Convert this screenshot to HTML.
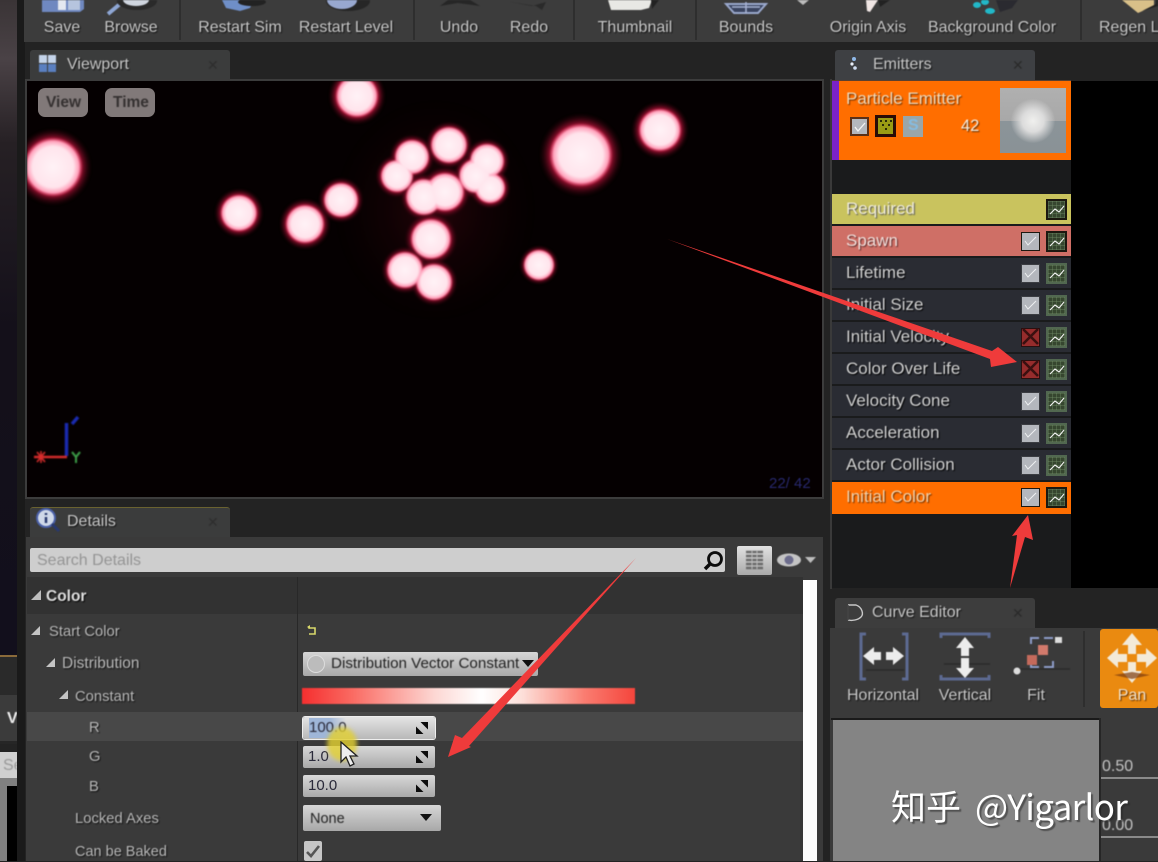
<!DOCTYPE html>
<html><head><meta charset="utf-8"><style>
*{box-sizing:border-box}
html,body{margin:0;padding:0;background:#232323}
body{width:1158px;height:861px;overflow:hidden;position:relative;font-family:"Liberation Sans","Noto Sans CJK SC",sans-serif;font-size:16px;color:#c8c8c8}
.a{position:absolute}
.t{position:absolute;white-space:nowrap;text-shadow:1px 1px 1px #111;filter:blur(.45px);line-height:20px;transform:translate(-50%,1px)}
.l{position:absolute;white-space:nowrap;filter:blur(.45px);line-height:20px;transform:translateY(1px)}
.tab{position:absolute;height:30px;width:200px;background:#3b3c3c;border-radius:3px 3px 0 0}
.row{position:absolute;left:832px;width:239px;height:30px;background:#2a2c33}
.row .l{left:14px;top:5px;color:#d2d2d2;text-shadow:1px 1px 1px #000;font-size:17px;transform:none}
.cb{position:absolute;left:189px;top:6px;width:19px;height:19px;background:#b4b7bd;border:1px solid #3b3d42}
.x{background:#962c2c;border-color:#2a1010}
.cv{position:absolute;left:214px;top:5px;width:21px;height:21px;border:2px solid #526850;background-color:#36462f;background-image:repeating-linear-gradient(0deg,rgba(120,150,110,.35) 0 1px,transparent 1px 4px),repeating-linear-gradient(90deg,rgba(120,150,110,.35) 0 1px,transparent 1px 4px)}
.dark .cb,.dark .cv{border-color:#1c1810}
.lab{font-size:14.8px;color:#b9b9b9;text-shadow:1px 1px 1px #111}
.num{position:absolute;left:303px;width:132px;height:22px;border-radius:2px;background:linear-gradient(#d8d8d8,#a9a9a9);color:#2a2a3a;font-size:15px;padding-left:5px;line-height:22px}
.corner{position:absolute;right:7px;top:5px;width:12px;height:12px}
.core circle{mix-blend-mode:lighten}
</style></head><body>

<!-- left strip -->
<div class="a" style="left:0;top:0;width:17px;height:655px;background:linear-gradient(#3a3436 0,#4a4246 9%,#262024 22%,#14101a 50%,#120f1c 100%)"></div>
<div class="a" style="left:0;top:655px;width:17px;height:2px;background:#8a6a3a"></div>
<div class="a" style="left:0;top:657px;width:17px;height:38px;background:#2a2a2a"></div>
<div class="a" style="left:0;top:695px;width:17px;height:46px;background:#3b3b3b"></div>
<div class="l" style="left:7px;top:708px;color:#eee;font-weight:bold;width:10px;overflow:hidden">V</div>
<div class="a" style="left:0;top:741px;width:17px;height:3px;background:#262626"></div>
<div class="a" style="left:0;top:752px;width:17px;height:26px;background:#d0d0d0"></div>
<div class="l" style="left:3px;top:755px;color:#999;width:14px;overflow:hidden">Se</div>
<div class="a" style="left:0;top:778px;width:17px;height:83px;background:#808080"></div>
<div class="a" style="left:7px;top:786px;width:10px;height:75px;background:#000"></div>
<div class="a" style="left:17px;top:0;width:8px;height:861px;background:#1a1a1a"></div>

<!-- toolbar -->
<div class="a" style="left:24px;top:0;width:1134px;height:42px;background:#3c3c3c"></div>
<div class="a" style="left:179px;top:0;width:2px;height:40px;background:#2e2e2e"></div>
<div class="a" style="left:413px;top:0;width:2px;height:40px;background:#2e2e2e"></div>
<div class="a" style="left:573px;top:0;width:2px;height:40px;background:#2e2e2e"></div>
<div class="a" style="left:695px;top:0;width:2px;height:40px;background:#2e2e2e"></div>
<div class="a" style="left:1080px;top:0;width:2px;height:40px;background:#2e2e2e"></div>
<svg class="a" style="left:0;top:0;filter:blur(.5px)" width="1158" height="20" viewBox="0 0 1158 20">
<path d="M42 0h42v9l-4 3H42z" fill="#6f88c0"/><rect x="58" y="0" width="8" height="10" fill="#e4e8f0"/><rect x="68" y="0" width="12" height="10" fill="#b6c4de"/>
<path d="M108 14l12-10" stroke="#8ea6d4" stroke-width="4"/><ellipse cx="137" cy="1" rx="20" ry="9" fill="#2a2a2a"/><ellipse cx="136" cy="0" rx="13" ry="6" fill="#cfd5df"/>
<path d="M222 0l4 8 14 3 10-3 4-8z" fill="#6f8fc8"/><ellipse cx="252" cy="2" rx="14" ry="4" fill="#222"/>
<ellipse cx="348" cy="1" rx="22" ry="10" fill="#262626"/><ellipse cx="342" cy="0" rx="15" ry="9" fill="#98a8d0"/>
<path d="M440 6l18-3 22 3-10-6h-22z" fill="#262626"/><path d="M510 2l22 4 14-4-4 8-6-4z" fill="#2a2a2a"/>
<path d="M608 0h44l-3 8-8 2h-30z" fill="#e8e8e4"/><path d="M651 0h8l-7 9z" fill="#222"/>
<path d="M726 4l8 9h24l8-9z" fill="#3a4460" stroke="#9aa8cc" stroke-width="2"/><path d="M746 2v11M732 7h28" stroke="#a7b3d3" stroke-width="1.5"/>
<path d="M797 0h12l-6 5z" fill="#bcbcbc"/>
<path d="M866 0h12l-8 12-3-1z" fill="#f0e6e4"/><path d="M878 0h12l-10 7z" fill="#222"/>
<ellipse cx="977" cy="5" rx="4" ry="3" fill="#22b8c8"/><ellipse cx="985" cy="2" rx="4" ry="3" fill="#22b8c8"/><ellipse cx="990" cy="11" rx="5" ry="3" fill="#22b8c8"/><path d="M996 0h22l-6 8-12 4z" fill="#2a2a30"/>
<path d="M1122 0h32v6l-16 7z" fill="#d9c089"/><path d="M1142 11l14-7v-4h2v6z" fill="#222"/>
</svg>
<div class="t" style="left:62px;top:17px">Save</div>
<div class="t" style="left:131px;top:17px">Browse</div>
<div class="t" style="left:240px;top:17px">Restart Sim</div>
<div class="t" style="left:346px;top:17px">Restart Level</div>
<div class="t" style="left:459px;top:17px">Undo</div>
<div class="t" style="left:529px;top:17px">Redo</div>
<div class="t" style="left:635px;top:17px">Thumbnail</div>
<div class="t" style="left:746px;top:17px">Bounds</div>
<div class="t" style="left:868px;top:17px">Origin Axis</div>
<div class="t" style="left:992px;top:17px">Background Color</div>
<div class="l" style="left:1099px;top:17px;text-shadow:1px 1px 1px #111">Regen L</div>

<!-- viewport tab -->
<div class="tab" style="left:30px;top:50px"></div>
<svg class="a" style="left:38px;top:54px;filter:blur(.4px)" width="20" height="20"><path d="M1 1h8v8H1zM10 1h8v8h-8z" fill="#c4d4ea"/><path d="M1 10h8v8H1zM10 10h8v8h-8z" fill="#5a7fc0"/></svg>
<div class="l" style="left:67px;top:54px;text-shadow:1px 1px 1px #111">Viewport</div>
<div class="l" style="left:207px;top:54px;color:#2e2e2e;font-size:14px">✕</div>

<!-- viewport -->
<div class="a" style="left:25px;top:79px;width:799px;height:420px;background:#3c3c3c"></div>
<div class="a" style="left:27px;top:81px;width:795px;height:416px;background:#050001;overflow:hidden">
<svg width="795" height="416" viewBox="27 81 795 416" style="position:absolute;left:0;top:0;filter:blur(.9px)">
<defs>
<radialGradient id="h"><stop offset="0" stop-color="#b8103a"/><stop offset=".68" stop-color="#a80e32"/><stop offset=".78" stop-color="#6a0a20"/><stop offset="1" stop-color="#200006" stop-opacity="0"/></radialGradient>
<radialGradient id="p"><stop offset="0" stop-color="#fff2f6"/><stop offset=".68" stop-color="#ffe4ec"/><stop offset=".86" stop-color="#ffa0ba"/><stop offset="1" stop-color="#f0466e" stop-opacity="0"/></radialGradient>
<radialGradient id="g"><stop offset="0" stop-color="#4a0814" stop-opacity=".45"/><stop offset="1" stop-color="#200006" stop-opacity="0"/></radialGradient>
</defs>
<ellipse cx="435" cy="210" rx="100" ry="110" fill="url(#g)"/>
<g fill="url(#h)">
<circle cx="357" cy="96" r="29"/><circle cx="53" cy="167" r="39"/><circle cx="239" cy="213" r="25"/><circle cx="305" cy="224" r="26"/><circle cx="341" cy="200" r="23"/><circle cx="397" cy="176" r="22"/><circle cx="412" cy="157" r="23"/><circle cx="449" cy="145" r="24"/><circle cx="487" cy="161" r="23"/><circle cx="476" cy="176" r="23"/><circle cx="490" cy="188" r="21"/><circle cx="424" cy="197" r="24"/><circle cx="445" cy="192" r="26"/><circle cx="431" cy="239" r="27"/><circle cx="405" cy="270" r="24"/><circle cx="434" cy="282" r="24"/><circle cx="539" cy="265" r="20"/><circle cx="581" cy="155" r="42"/><circle cx="660" cy="130" r="29"/>
</g>
<g fill="url(#p)" class="core">
<circle cx="357" cy="96" r="22"/><circle cx="53" cy="167" r="30"/><circle cx="239" cy="213" r="19"/><circle cx="305" cy="224" r="20"/><circle cx="341" cy="200" r="18"/><circle cx="397" cy="176" r="17"/><circle cx="412" cy="157" r="18"/><circle cx="449" cy="145" r="19"/><circle cx="487" cy="161" r="18"/><circle cx="476" cy="176" r="18"/><circle cx="490" cy="188" r="16"/><circle cx="424" cy="197" r="19"/><circle cx="445" cy="192" r="20"/><circle cx="431" cy="239" r="21"/><circle cx="405" cy="270" r="19"/><circle cx="434" cy="282" r="19"/><circle cx="539" cy="265" r="16"/><circle cx="581" cy="155" r="32"/><circle cx="660" cy="130" r="22"/>
</g>
<path d="M66.5 456V423" stroke="#1a2ab0" stroke-width="3.5"/><path d="M72 424l6-7" stroke="#1a2ab0" stroke-width="3.5"/>
<path d="M34 457h33" stroke="#d82c2c" stroke-width="2.5"/><path d="M37 452l8 10M45 452l-8 10M41 451v12" stroke="#d82c2c" stroke-width="1.6"/>
<path d="M72 452l4 5 4-5M76 457v6" stroke="#3ea24a" stroke-width="2" fill="none"/>
</svg>
<div class="l" style="left:742px;top:392px;color:#28286e;font-size:15px">22/ 42</div>
</div>
<div class="a" style="left:38px;top:88px;width:50px;height:29px;background:#817979;border-radius:7px"></div>
<div class="l" style="left:46px;top:92px;color:#353131;font-weight:bold;font-size:15.5px">View</div>
<div class="a" style="left:105px;top:88px;width:50px;height:29px;background:#817979;border-radius:7px"></div>
<div class="l" style="left:113px;top:92px;color:#353131;font-weight:bold;font-size:15.5px">Time</div>

<!-- details -->
<div class="a" style="left:26px;top:537px;width:797px;height:324px;background:#3a3a3a"></div>
<div class="tab" style="left:30px;top:507px;border-top:1px solid #6a6230"></div>
<svg class="a" style="left:36px;top:507px;filter:blur(.4px)" width="26" height="26"><circle cx="10" cy="11" r="9" fill="#cfd8e8" stroke="#4a60a8" stroke-width="2"/><path d="M16 17l7 7" stroke="#28386e" stroke-width="3"/><path d="M10 6v2M10 10v6" stroke="#28386e" stroke-width="2.5"/></svg>
<div class="l" style="left:67px;top:511px;text-shadow:1px 1px 1px #111">Details</div>
<div class="l" style="left:207px;top:511px;color:#2e2e2e;font-size:14px">✕</div>
<div class="a" style="left:30px;top:548px;width:695px;height:24px;background:#cecece;border-radius:2px"></div>
<div class="l" style="left:37px;top:550px;color:#949494">Search Details</div>
<svg class="a" style="left:702px;top:549px" width="24" height="23"><circle cx="13" cy="10" r="6.5" fill="none" stroke="#0c0c0c" stroke-width="2.8"/><path d="M8 15l-5 5" stroke="#0c0c0c" stroke-width="3.5"/></svg>
<div class="a" style="left:737px;top:546px;width:35px;height:29px;background:linear-gradient(#e2e2e2,#a9a9a9);border-radius:2px"></div>
<svg class="a" style="left:745px;top:550px;filter:blur(.4px)" width="20" height="20"><path d="M1 2h17M1 6h17M1 10h17M1 14h17M1 18h17" stroke="#6a6a6a" stroke-width="2.4"/><path d="M7 1v18M12 1v18" stroke="#bbb" stroke-width="1"/></svg>
<svg class="a" style="left:776px;top:552px;filter:blur(.4px)" width="42" height="16"><ellipse cx="13" cy="8" rx="12" ry="6.5" fill="#c4c4c4"/><circle cx="13" cy="8" r="4.5" fill="#6c6c8c"/><path d="M29 5h11l-5.500 6z" fill="#bdbdbd"/></svg>

<div class="a" style="left:27px;top:577px;width:776px;height:37px;background:#323232"></div>
<div class="a" style="left:297px;top:577px;width:1px;height:284px;background:#282828"></div>
<div class="a" style="left:27px;top:712px;width:776px;height:29px;background:#484848"></div>
<div class="a" style="left:803px;top:580px;width:14px;height:281px;background:#fff"></div>
<svg class="a" style="left:0;top:0;pointer-events:none" width="300" height="861">
<path d="M41 590v10H31z" fill="#bdbdbd"/><path d="M40 626v9H31z" fill="#c4c4c4"/><path d="M55 658v9H46z" fill="#c4c4c4"/><path d="M68 690v9H59z" fill="#c4c4c4"/>
</svg>
<div class="l" style="left:46px;top:586px;color:#e0e0e0;font-weight:bold;font-size:15.500px;text-shadow:1px 1px 1px #000">Color</div>
<div class="l lab" style="left:49px;top:621px">Start Color</div>
<div class="l lab" style="left:62px;top:653px;font-size:15.500px">Distribution</div>
<div class="l lab" style="left:75px;top:686px">Constant</div>
<div class="l lab" style="left:89px;top:717px">R</div>
<div class="l lab" style="left:89px;top:746px">G</div>
<div class="l lab" style="left:89px;top:776px">B</div>
<div class="l lab" style="left:75px;top:808px">Locked Axes</div>
<div class="l lab" style="left:75px;top:841px;font-size:14.500px">Can be Baked</div>

<svg class="a" style="left:306px;top:624px" width="13" height="13"><path d="M3 2v2h6v6H3" fill="none" stroke="#d8d86a" stroke-width="1.6"/><path d="M1 3l3-2v4z" fill="#d8d86a"/></svg>
<div class="a" style="left:303px;top:652px;width:235px;height:24px;background:linear-gradient(#d6d6d6,#a8a8a8);border-radius:2px"></div>
<div class="a" style="left:307px;top:655px;width:18px;height:18px;border-radius:50%;background:#bcbcbc;border:1px solid #ddd"></div>
<div class="l" style="left:331px;top:653px;color:#222;font-size:15.200px">Distribution Vector Constant</div>
<svg class="a" style="left:522px;top:660px" width="12" height="7"><path d="M0 0h12l-6 7z" fill="#111"/></svg>
<div class="a" style="left:302px;top:688px;width:333px;height:16px;background:linear-gradient(90deg,#f52f2f 0,#fa6a62 15%,#fdd8d4 40%,#fff 54%,#fde0da 66%,#fa7c70 85%,#f5453c 100%);filter:blur(.5px)"></div>

<div class="num" style="top:717px;background:linear-gradient(#e4e4e4,#b8b8b8);box-shadow:0 0 0 1px #eee"><span style="position:absolute;left:6px;top:1px;width:37px;height:20px;background:linear-gradient(90deg,#9fb6d8 55%,rgba(170,190,220,0))"></span><span class="l" style="left:6px;top:1px;transform:none">100.0</span>
<svg class="corner" viewBox="0 0 12 12"><path d="M4.500 0H12v7.500zM0 4.500V12h7.500z" fill="#0c0c0c"/></svg></div>
<div class="num" style="top:746px">1.0<svg class="corner" viewBox="0 0 12 12"><path d="M4.500 0H12v7.500zM0 4.500V12h7.500z" fill="#0c0c0c"/></svg></div>
<div class="num" style="top:775px">10.0<svg class="corner" viewBox="0 0 12 12"><path d="M4.500 0H12v7.500zM0 4.500V12h7.500z" fill="#0c0c0c"/></svg></div>
<div class="a" style="left:303px;top:805px;width:138px;height:26px;background:linear-gradient(#d6d6d6,#a8a8a8);border-radius:2px"></div>
<div class="l" style="left:310px;top:808px;color:#222;font-size:14.5px">None</div>
<svg class="a" style="left:420px;top:814px" width="12" height="7"><path d="M0 0h12l-6 7z" fill="#111"/></svg>
<div class="a" style="left:304px;top:841px;width:18px;height:20px;background:#c6c6c6;border-radius:2px"></div>
<svg class="a" style="left:305px;top:844px" width="16" height="14"><path d="M2 8l4 4 8-10" fill="none" stroke="#555" stroke-width="2.6"/></svg>
<div class="a" style="left:327px;top:727px;width:30px;height:34px;border-radius:50%;background:rgba(226,208,50,.82);filter:blur(2px)"></div>
<svg class="a" style="left:339px;top:741px" width="20" height="28"><path d="M2 1v20l5-5 4 9 4-2-4-8h7z" fill="#eee" stroke="#222" stroke-width="1.3"/></svg>

<!-- emitters -->
<div class="tab" style="left:835px;top:50px;background:#3e4043"></div>
<svg class="a" style="left:848px;top:56px" width="14" height="16"><circle cx="6" cy="3" r="2" fill="#8fb8e8"/><circle cx="4" cy="8" r="1.6" fill="#e8eef8"/><circle cx="7" cy="12" r="1.8" fill="#cfdcf0"/></svg>
<div class="l" style="left:873px;top:54px;text-shadow:1px 1px 1px #111">Emitters</div>
<div class="l" style="left:1012px;top:54px;color:#2a2a2a;font-size:14px">✕</div>
<div class="a" style="left:830px;top:79px;width:2px;height:510px;background:#3a3a3a"></div>
<div class="a" style="left:832px;top:160px;width:239px;height:428px;background:#1a1b1c"></div>
<div class="a" style="left:1071px;top:81px;width:87px;height:507px;background:#000"></div>
<div class="a" style="left:832px;top:80px;width:239px;height:1px;background:#5a4030"></div>
<div class="a" style="left:832px;top:81px;width:7px;height:79px;background:#7a22c8"></div>
<div class="a" style="left:839px;top:81px;width:232px;height:79px;background:#ff6e00"></div>
<div class="l" style="left:846px;top:88px;color:#f0d8b8;text-shadow:1px 1px 1px #6a3000;font-size:17px">Particle Emitter</div>
<div class="a" style="left:850px;top:117px;width:19px;height:19px;background:#b4b7bd;border:2px solid #5a3018"></div>
<svg class="a" style="left:853px;top:120px" width="14" height="14"><path d="M2 7l3 4 7-8" fill="none" stroke="#f4f4f4" stroke-width="1.3"/></svg>
<div class="a" style="left:875px;top:115px;width:21px;height:22px;background:#9a9c14;border:3px solid #2a0c06"></div>
<svg class="a" style="left:879px;top:120px" width="14" height="12" fill="#2c2c08"><rect x="1" y="0" width="2" height="2"/><rect x="6" y="0" width="2" height="2"/><rect x="11" y="0" width="2" height="2"/><rect x="3" y="4" width="2" height="2"/><rect x="9" y="4" width="2" height="2"/><rect x="6" y="8" width="2" height="2"/></svg>
<div class="a" style="left:903px;top:116px;width:20px;height:21px;background:#9aa6a8"></div>
<div class="l" style="left:908px;top:115px;color:#84bce2;font-weight:bold">S</div>
<div class="l" style="left:961px;top:115px;color:#f8ecdc;text-shadow:1px 1px 1px #5a2c00;font-size:16.5px">42</div>
<div class="a" style="left:1000px;top:88px;width:66px;height:65px;background:linear-gradient(#b0b0b0 0,#a8a8a8 51%,#8b9499 51%,#8a9296 100%);overflow:hidden">
<div class="a" style="left:11px;top:11px;width:44px;height:44px;border-radius:50%;background:radial-gradient(#f0f0ee 0,#dcdcdc 35%,rgba(190,190,190,0) 72%)"></div>
</div>

<div class="row dark" style="top:194px;background:#c9c35e"><div class="l" style="color:#f0ecd8;text-shadow:1px 1px 1px #555">Required</div><div class="cv"></div></div>
<div class="row dark" style="top:226px;background:#cf6f66"><div class="l" style="color:#f2e0dc;text-shadow:1px 1px 1px #5a2a2a">Spawn</div><div class="cb"></div><div class="cv"></div></div>
<div class="row" style="top:258px"><div class="l">Lifetime</div><div class="cb"></div><div class="cv"></div></div>
<div class="row" style="top:290px"><div class="l">Initial Size</div><div class="cb"></div><div class="cv"></div></div>
<div class="row" style="top:322px"><div class="l">Initial Velocity</div><div class="cb x"></div><div class="cv"></div></div>
<div class="row" style="top:354px"><div class="l">Color Over Life</div><div class="cb x"></div><div class="cv"></div></div>
<div class="row" style="top:386px"><div class="l">Velocity Cone</div><div class="cb"></div><div class="cv"></div></div>
<div class="row" style="top:418px"><div class="l">Acceleration</div><div class="cb"></div><div class="cv"></div></div>
<div class="row" style="top:450px"><div class="l">Actor Collision</div><div class="cb"></div><div class="cv"></div></div>
<div class="row dark" style="top:482px;height:32px;background:#ff6e00"><div class="l" style="color:#f4d0a8;text-shadow:1px 1px 1px #6a3000">Initial Color</div><div class="cb"></div><div class="cv"></div></div>
<svg class="a" style="left:832px;top:194px" width="239" height="320">
<g fill="none" stroke="#f2f2f2" stroke-width="1.1"><path d="M218 20l5-5 4 3 5-6"/><path d="M218 52l5-5 4 3 5-6"/><path d="M218 84l5-5 4 3 5-6"/><path d="M218 116l5-5 4 3 5-6"/><path d="M218 148l5-5 4 3 5-6"/><path d="M218 180l5-5 4 3 5-6"/><path d="M218 212l5-5 4 3 5-6"/><path d="M218 244l5-5 4 3 5-6"/><path d="M218 276l5-5 4 3 5-6"/><path d="M218 308l5-5 4 3 5-6"/></g>
<g fill="none" stroke="#eef0f2" stroke-width="1"><path d="M193 47l3 4 8-8"/><path d="M193 79l3 4 8-8"/><path d="M193 111l3 4 8-8"/><path d="M193 207l3 4 8-8"/><path d="M193 239l3 4 8-8"/><path d="M193 271l3 4 8-8"/><path d="M193 303l3 4 8-8"/></g>
<g stroke="#3a1010" stroke-width="2.6"><path d="M191 135l15 15M206 135l-15 15"/><path d="M191 167l15 15M206 167l-15 15"/></g>
</svg>

<!-- curve editor -->
<div class="tab" style="left:835px;top:598px;background:#3d3d3d"></div>
<svg class="a" style="left:845px;top:602px" width="22" height="22"><path d="M3 3h8c6 2 8 9 5 12-3 3-9 4-13 3" fill="none" stroke="#c8c8c8" stroke-width="1.4"/><path d="M3 3v15" stroke="#444" stroke-width="1.4"/></svg>
<div class="l" style="left:872px;top:602px;text-shadow:1px 1px 1px #111">Curve Editor</div>
<div class="l" style="left:1012px;top:602px;color:#2a2a2a;font-size:14px">✕</div>
<div class="a" style="left:830px;top:628px;width:328px;height:233px;background:#3a3a3a"></div>
<div class="a" style="left:1083px;top:631px;width:2px;height:76px;background:#2e2e2e"></div>
<div class="a" style="left:1100px;top:629px;width:58px;height:79px;background:#ea8a10;border-radius:3px"></div>
<svg class="a" style="left:830px;top:628px;filter:blur(.5px)" width="328" height="60">
<path d="M36 42h38M114 36h46M188 41h52" stroke="#2a2a2a" stroke-width="1.5"/>
<g fill="none" stroke="#5d6a92" stroke-width="3"><path d="M36 6h-5v45h5M72 6h5v45h-5"/><path d="M111 10V6h48v4M111 47v4h48v-4"/></g>
<path d="M201 16V10h8M214 10h9M201 31v8h8M214 39h9v-6" fill="none" stroke="#8d9cc8" stroke-width="2"/>
<path d="M33 28l11-9v5h7v8h-7v5zM74 28l-11-9v5h-7v8h7v5z" fill="#ececec"/>
<path d="M135 9l9 11h-5v8h-8v-8h-5zM135 50l9-10h-5v-10h-8v10h-5z" fill="#ececec"/>
<rect x="197" y="27" width="10" height="10" fill="#c46a5c"/><rect x="208" y="17" width="10" height="10" fill="#d27a6c"/><rect x="225" y="9" width="7" height="6" fill="#ddd"/><circle cx="187" cy="43" r="3.500" fill="#ddd"/>
<path d="M302 5l10 12h-6v9h-8v-9h-6zM302 55l10-12h-6v-9h-8v9h-6zM277 30l11-10v6h9v8h-9v6zM327 30l-11-10v6h-9v8h9v6z" fill="#f3ead8"/>
<path d="M284 47l18-3 18 3-18 4z" fill="#7a3a10" opacity=".7"/>
</svg>
<div class="t" style="left:883px;top:685px">Horizontal</div>
<div class="t" style="left:965px;top:685px">Vertical</div>
<div class="t" style="left:1036px;top:685px">Fit</div>
<div class="t" style="left:1132px;top:685px;color:#f4e2c8;text-shadow:1px 1px 1px #5a2c00">Pan</div>
<div class="a" style="left:831px;top:718px;width:270px;height:2px;background:#1a1a1a"></div>
<div class="a" style="left:833px;top:720px;width:266px;height:141px;background:#848484"></div>
<div class="a" style="left:1099px;top:718px;width:2px;height:143px;background:#262626"></div>
<div class="l" style="left:1102px;top:756px;color:#c4c4c4">0.50</div>
<div class="a" style="left:1101px;top:777px;width:57px;height:2px;background:#8a8a8a"></div>
<div class="l" style="left:1102px;top:815px;color:#c4c4c4">0.00</div>
<div class="a" style="left:1101px;top:836px;width:57px;height:2px;background:#8a8a8a"></div>

<!-- red arrows -->
<svg class="a" style="left:0;top:0" width="1158" height="861">
<g fill="#ef3b3b">
<path d="M667 239L992 351 998 347 1017 362 991 367 990 359z"/>
<path d="M636 558L462 738 455 735 448 757 471 747 469 746z"/>
<path d="M1010 588L1017 535 1012 536 1028 515 1033 540 1025 537z"/>
</g>
</svg>

<!-- watermark -->
<div class="l" style="left:891px;top:785px;font-size:35px;line-height:42px;color:#fff;text-shadow:2px 2px 1px rgba(40,40,40,.55);filter:none;transform:none;font-family:'Noto Sans CJK SC','Liberation Sans',sans-serif">知乎<span style="margin-left:14px;letter-spacing:-.7px">@Yigarlor</span></div>
</body></html>
